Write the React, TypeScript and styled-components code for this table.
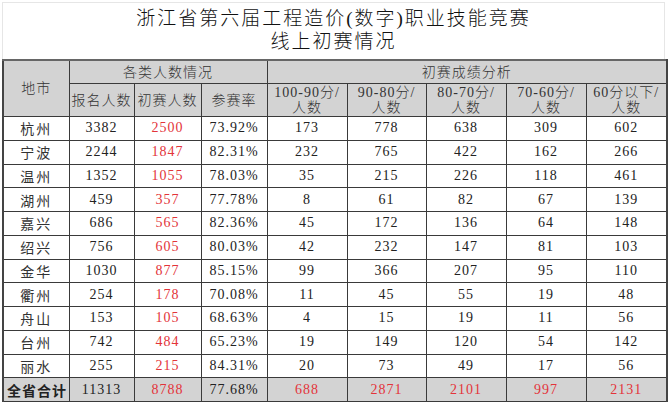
import styled, { createGlobalStyle } from "styled-components";

const GlobalStyle = createGlobalStyle`
    html, body {
        margin: 0;
        padding: 0;
        background: #fff;
    }
    body {
        font-family: "Liberation Serif", "Noto Sans CJK SC", serif;
        color: #222;
    }
`

const Frame = styled.div`
    width: 663px;
    margin: 2px 0 0 2px;
    border-top: 1px solid #e6e6e6;
    border-right: 1px solid #e6e6e6;
    border-left: 1px solid #e6e6e6;
    box-sizing: border-box;
`

const Title = styled.div`
    height: 56px;
    display: flex;
    flex-direction: column;
    align-items: center;
    justify-content: center;
    padding-bottom: 3px;
    box-sizing: border-box;
    font-size: 19px;
    line-height: 23px;
    letter-spacing: 2px;
    color: #111;
`

const TitleLine = styled.div`
    font-weight: 300;
`

const Table = styled.table`
    width: 664px;
    margin-left: -1px;
    border-collapse: collapse;
    table-layout: fixed;
    font-size: 14px;
    border-top: 2px solid #666;
    border-left: 2px solid #444;
    border-right: 2px solid #444;
    border-bottom: 1px solid #444;
`

const HeadCell = styled.th<{ $tall?: boolean }>`
    background: #d3d3d3;
    border: 1px solid #3a3a3a;
    font-weight: 300;
    font-size: 14px;
    line-height: 15px;
    letter-spacing: 1px;
    color: #333;
    height: ${p => (p.$tall ? "32px" : "22px")};
    padding: 0;
    text-align: center;
    vertical-align: middle;
`

const Cell = styled.td<{ $red?: boolean; $total?: boolean; $city?: boolean }>`
    border: 1px solid #3a3a3a;
    height: 22.75px;
    padding: 0;
    text-align: center;
    vertical-align: middle;
    font-weight: ${p => (p.$city ? 400 : 300)};
    letter-spacing: ${p => (p.$city ? "2px" : "1px")};
    color: ${p => (p.$red ? "#e3343a" : p.$city ? "#333" : "#222")};
    background: ${p => (p.$total ? "#d3d3d3" : "#fff")};
`

const TotalLabel = styled.td`
    border: 1px solid #3a3a3a;
    background: #d3d3d3;
    height: 22.75px;
    padding: 0 0 0 3px;
    text-align: left;
    font-weight: 700;
    font-size: 14px;
    letter-spacing: 1px;
    color: #222;
`

type Row = [string, number, number, string, number, number, number, number, number]

const rows: Row[] = [
    ["杭州", 3382, 2500, "73.92%", 173, 778, 638, 309, 602],
    ["宁波", 2244, 1847, "82.31%", 232, 765, 422, 162, 266],
    ["温州", 1352, 1055, "78.03%", 35, 215, 226, 118, 461],
    ["湖州", 459, 357, "77.78%", 8, 61, 82, 67, 139],
    ["嘉兴", 686, 565, "82.36%", 45, 172, 136, 64, 148],
    ["绍兴", 756, 605, "80.03%", 42, 232, 147, 81, 103],
    ["金华", 1030, 877, "85.15%", 99, 366, 207, 95, 110],
    ["衢州", 254, 178, "70.08%", 11, 45, 55, 19, 48],
    ["舟山", 153, 105, "68.63%", 4, 15, 19, 11, 56],
    ["台州", 742, 484, "65.23%", 19, 149, 120, 54, 142],
    ["丽水", 255, 215, "84.31%", 20, 73, 49, 17, 56],
]

const colWidths = [66, 65, 67, 66, 80, 79, 80, 80, 81]

const scoreHeads = ["100-90分/", "90-80分/", "80-70分/", "70-60分/", "60分以下/"]

export default function App() {
    return (
        <>
            <GlobalStyle />
            <Frame>
                <Title>
                    <TitleLine>浙江省第六届工程造价(数字)职业技能竞赛</TitleLine>
                    <TitleLine>线上初赛情况</TitleLine>
                </Title>
                <Table>
                    <colgroup>
                        {colWidths.map((w, i) => <col key={i} style={{ width: w }} />)}
                    </colgroup>
                    <thead>
                        <tr>
                            <HeadCell rowSpan={2}>地市</HeadCell>
                            <HeadCell colSpan={3}>各类人数情况</HeadCell>
                            <HeadCell colSpan={5}>初赛成绩分析</HeadCell>
                        </tr>
                        <tr>
                            <HeadCell $tall>报名人数</HeadCell>
                            <HeadCell $tall>初赛人数</HeadCell>
                            <HeadCell $tall>参赛率</HeadCell>
                            {scoreHeads.map(h => (
                                <HeadCell $tall key={h}>{h}<br />人数</HeadCell>
                            ))}
                        </tr>
                    </thead>
                    <tbody>
                        {rows.map(r => (
                            <tr key={r[0]}>
                                <Cell $city>{r[0]}</Cell>
                                <Cell>{r[1]}</Cell>
                                <Cell $red>{r[2]}</Cell>
                                <Cell>{r[3]}</Cell>
                                <Cell>{r[4]}</Cell>
                                <Cell>{r[5]}</Cell>
                                <Cell>{r[6]}</Cell>
                                <Cell>{r[7]}</Cell>
                                <Cell>{r[8]}</Cell>
                            </tr>
                        ))}
                        <tr>
                            <TotalLabel>全省合计</TotalLabel>
                            <Cell $total>11313</Cell>
                            <Cell $total $red>8788</Cell>
                            <Cell $total>77.68%</Cell>
                            <Cell $total $red>688</Cell>
                            <Cell $total $red>2871</Cell>
                            <Cell $total $red>2101</Cell>
                            <Cell $total $red>997</Cell>
                            <Cell $total $red>2131</Cell>
                        </tr>
                    </tbody>
                </Table>
            </Frame>
        </>
    )
}
